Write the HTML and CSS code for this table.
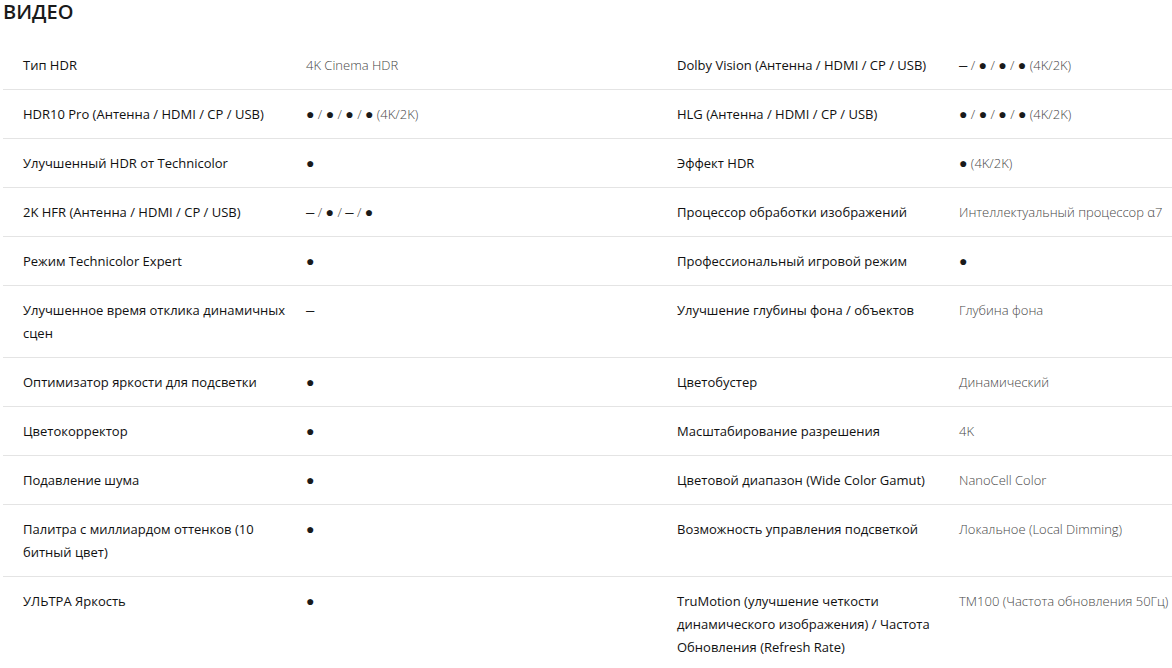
FILE: index.html
```html
<!DOCTYPE html>
<html lang="ru">
<head>
<meta charset="utf-8">
<title>Видео</title>
<link rel="stylesheet" href="styles.css">
</head>
<body>
<section class="spec">
  <h2 class="spec-title">ВИДЕО</h2>
  <div class="spec-table">
    <div class="row">
      <div class="label">Тип HDR</div>
      <div class="value">4K Cinema HDR</div>
      <div class="label">Dolby Vision (Антенна / HDMI / CP / USB)</div>
      <div class="value"><span class="dash">–</span> / <span class="dot">●</span> / <span class="dot">●</span> / <span class="dot">●</span> (4K/2K)</div>
    </div>
    <div class="row">
      <div class="label">HDR10 Pro (Антенна / HDMI / CP / USB)</div>
      <div class="value"><span class="dot">●</span> / <span class="dot">●</span> / <span class="dot">●</span> / <span class="dot">●</span> (4K/2K)</div>
      <div class="label">HLG (Антенна / HDMI / CP / USB)</div>
      <div class="value"><span class="dot">●</span> / <span class="dot">●</span> / <span class="dot">●</span> / <span class="dot">●</span> (4K/2K)</div>
    </div>
    <div class="row">
      <div class="label">Улучшенный HDR от Technicolor</div>
      <div class="value"><span class="dot">●</span></div>
      <div class="label">Эффект HDR</div>
      <div class="value"><span class="dot">●</span> (4K/2K)</div>
    </div>
    <div class="row">
      <div class="label">2K HFR (Антенна / HDMI / CP / USB)</div>
      <div class="value"><span class="dash">–</span> / <span class="dot">●</span> / <span class="dash">–</span> / <span class="dot">●</span></div>
      <div class="label">Процессор обработки изображений</div>
      <div class="value">Интеллектуальный процессор α7</div>
    </div>
    <div class="row">
      <div class="label">Режим Technicolor Expert</div>
      <div class="value"><span class="dot">●</span></div>
      <div class="label">Профессиональный игровой режим</div>
      <div class="value"><span class="dot">●</span></div>
    </div>
    <div class="row">
      <div class="label">Улучшенное время отклика динамичных сцен</div>
      <div class="value"><span class="dash">–</span></div>
      <div class="label">Улучшение глубины фона / объектов</div>
      <div class="value">Глубина фона</div>
    </div>
    <div class="row">
      <div class="label">Оптимизатор яркости для подсветки</div>
      <div class="value"><span class="dot">●</span></div>
      <div class="label">Цветобустер</div>
      <div class="value">Динамический</div>
    </div>
    <div class="row">
      <div class="label">Цветокорректор</div>
      <div class="value"><span class="dot">●</span></div>
      <div class="label">Масштабирование разрешения</div>
      <div class="value">4K</div>
    </div>
    <div class="row">
      <div class="label">Подавление шума</div>
      <div class="value"><span class="dot">●</span></div>
      <div class="label">Цветовой диапазон (Wide Color Gamut)</div>
      <div class="value">NanoCell Color</div>
    </div>
    <div class="row">
      <div class="label">Палитра с миллиардом оттенков (10 битный цвет)</div>
      <div class="value"><span class="dot">●</span></div>
      <div class="label">Возможность управления подсветкой</div>
      <div class="value">Локальное (Local Dimming)</div>
    </div>
    <div class="row">
      <div class="label">УЛЬТРА Яркость</div>
      <div class="value"><span class="dot">●</span></div>
      <div class="label">TruMotion (улучшение четкости динамического изображения) / Частота Обновления (Refresh Rate)</div>
      <div class="value">TM100 (Частота обновления 50Гц)</div>
    </div>
  </div>
</section>
</body>
</html>
```

FILE: styles.css
```css
html, body {
  margin: 0;
  padding: 0;
  background: #fff;
  overflow: hidden;
}

body {
  font-family: "Open Sans", "Noto Sans", sans-serif;
  color: #222;
}

.spec {
  padding-left: 3px;
}

.spec-title {
  margin: 0 0 17px;
  font-size: 20px;
  line-height: 24px;
  font-weight: 600;
  color: #1a1a1a;
}

.spec-table {
  width: 1200px;
}

.row {
  display: grid;
  grid-template-columns: 283px 371px 282px 1fr;
  padding: 13px 0 12px;
  border-bottom: 1px solid #e4e4e4;
  font-size: 13px;
  line-height: 23px;
}

.label {
  padding: 0 0 0 20px;
  color: #111;
  font-weight: 400;
}

.value {
  padding-left: 20px;
  color: #474747;
  font-weight: 300;
}

.dot {
  color: #1a1a1a;
  font-family: "Liberation Sans", sans-serif;
  font-size: 14px;
  line-height: 0;
}

.dash {
  color: #1a1a1a;
  font-family: "Liberation Sans", sans-serif;
  font-size: 15px;
  line-height: 0;
}
```
